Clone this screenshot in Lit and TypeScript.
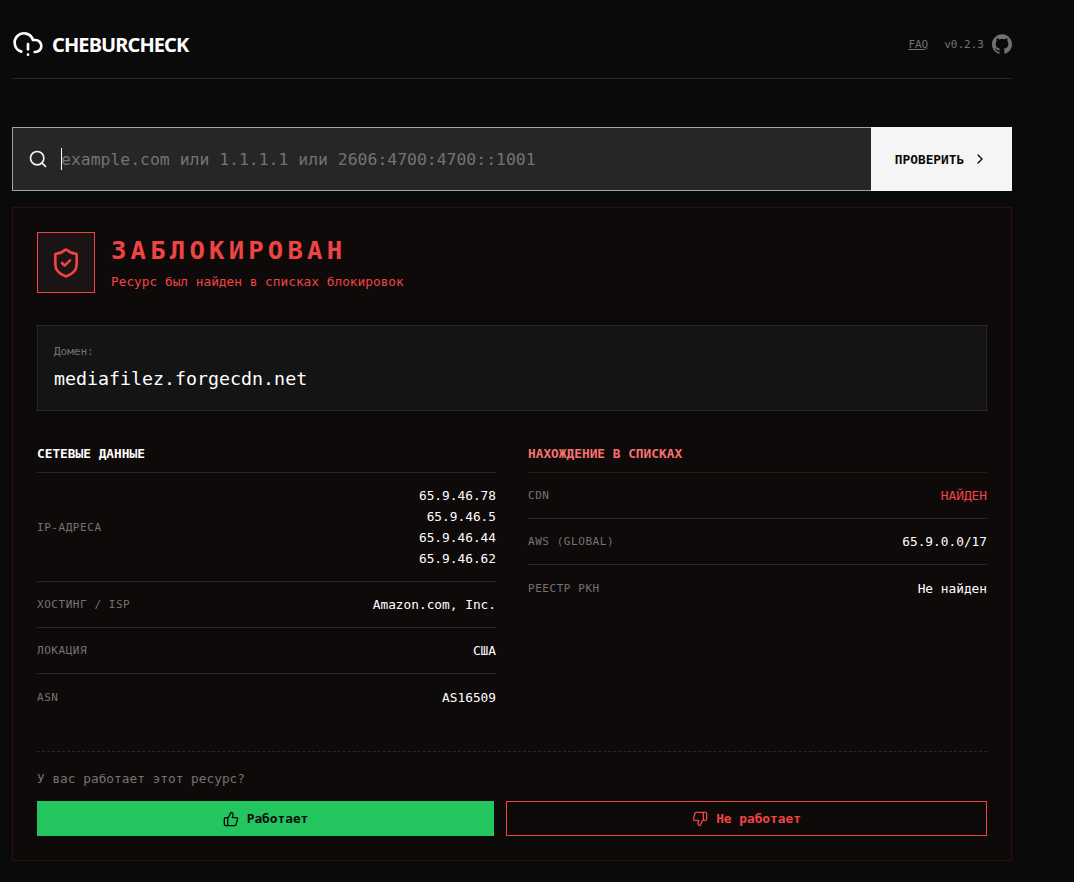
import { LitElement, html, css } from "lit";
import { customElement } from "lit/decorators.js";

@customElement("app-root")
export class AppRoot extends LitElement {
  static styles = css`
    :host { display: block; min-height: 882px; background: #0a0a0a; color: #fff; font-family: "DejaVu Sans Mono", monospace; font-size: 12.8px; box-sizing: border-box; overflow: hidden; }
    * { box-sizing: border-box; }
    .wrap { width: 1000px; margin-left: 12px; }
    header { height: 79px; padding-top: 28px; border-bottom: 1px solid #262626; display: flex; justify-content: space-between; align-items: flex-start; }
    .logo { display: flex; align-items: center; gap: 8px; height: 32px; color: #fff; }
    .brand { font-family: "Noto Sans", sans-serif; font-weight: 700; font-size: 20px; letter-spacing: -0.9px; }
    .hright { display: flex; align-items: center; gap: 16px; height: 32px; color: #737373; font-size: 11px; }
    .hright a { color: #737373; text-decoration: underline; }
    .ver { display: flex; align-items: center; gap: 8px; }
    .ver svg { color: #737373; display: block; }
    .search { margin-top: 48px; height: 64px; display: flex; }
    .field { flex: 1; display: flex; align-items: center; background: #262626; border: 1px solid #a3a3a3; border-right: 0; padding-left: 15px; }
    .field svg { color: #f5f5f5; }
    .caret { width: 1px; height: 22px; background: #fff; margin-left: 13px; margin-right: -1px; }
    .ph { color: #737373; font-size: 16.43px; }
    .go { width: 141px; background: #f5f5f5; color: #0a0a0a; display: flex; align-items: center; justify-content: center; gap: 8px; font-weight: 700; }
    .card { margin-top: 16px; height: 654px; background: #0f0a0a; border: 1px solid #2a0f0f; padding: 24px; display: flex; flex-direction: column; }
    .status { display: flex; gap: 16px; }
    .shield { width: 58px; height: 61px; border: 1px solid #ef4444; background: #1a1414; color: #ef4444; display: flex; align-items: center; justify-content: center; }
    .stitle { font-size: 25.6px; font-weight: 700; letter-spacing: 4.2px; color: #ef4444; line-height: 36px; }
    .ssub { color: #ef4444; margin-top: 6px; line-height: 16px; }
    .domain { margin-top: 32px; height: 86px; background: #141414; border: 1px solid #262626; padding: 16px; }
    .dl { font-size: 11px; color: #737373; line-height: 20px; }
    .dv { font-size: 18.3px; line-height: 28px; margin-top: 3px; }
    .cols { margin-top: 32px; display: grid; grid-template-columns: 459px 459px; gap: 32px; }
    h3 { margin: 0; font-size: 12.8px; font-weight: 700; line-height: 16px; border-bottom: 1px solid #262626; height: 27px; margin-top: 3px; }
    .red h3 { color: #f87171; border-bottom-color: #3a1212; }
    .row { display: flex; justify-content: space-between; align-items: center; padding: 12px 0; border-bottom: 1px solid #262626; min-height: 46px; line-height: 21px; }
    .row:last-child { border-bottom: 0; }
    .k { color: #737373; font-size: 11px; letter-spacing: 0.55px; }
    .v { text-align: right; }
    .found { color: #ef4444; }
    .vote { margin-top: auto; border-top: 1px dashed #2b2626; padding-top: 17px; }
    .q { color: #737373; line-height: 20px; }
    .btns { display: grid; grid-template-columns: 457px 481px; gap: 12px; margin-top: 12px; }
    .btn { height: 35px; display: flex; align-items: center; justify-content: center; gap: 8px; font-weight: 700; }
    .ok { background: #22c55e; color: #0a0a0a; }
    .no { border: 1px solid #ef4444; color: #ef4444; }
  `;

  render() {
    const net: [string, unknown][] = [
      ["IP-АДРЕСА", html`65.9.46.78<br />65.9.46.5<br />65.9.46.44<br />65.9.46.62`],
      ["ХОСТИНГ / ISP", "Amazon.com, Inc."],
      ["ЛОКАЦИЯ", "США"],
      ["ASN", "AS16509"],
    ];
    return html`<div class="wrap">
      <header>
        <div class="logo">
          <svg xmlns="http://www.w3.org/2000/svg" width="32" height="32" viewBox="0 0 24 24" fill="none" stroke="currentColor" stroke-width="2" stroke-linecap="round" stroke-linejoin="round"><path d="M12 12v4"/><path d="M12 20h.01"/><path d="M17 18h.5a1 1 0 0 0 0-9h-1.79A7 7 0 1 0 7 17.708"/></svg>
          <span class="brand">CHEBURCHECK</span>
        </div>
        <div class="hright">
          <a>FAQ</a>
          <div class="ver"><span>v0.2.3</span>
            <svg xmlns="http://www.w3.org/2000/svg" width="20" height="20" viewBox="0 0 24 24" fill="currentColor"><path d="M12 .297c-6.63 0-12 5.373-12 12 0 5.303 3.438 9.8 8.205 11.385.6.113.82-.258.82-.577 0-.285-.01-1.04-.015-2.04-3.338.724-4.042-1.61-4.042-1.61C4.422 18.07 3.633 17.7 3.633 17.7c-1.087-.744.084-.729.084-.729 1.205.084 1.838 1.236 1.838 1.236 1.07 1.835 2.809 1.305 3.495.998.108-.776.417-1.305.76-1.605-2.665-.3-5.466-1.332-5.466-5.93 0-1.31.465-2.38 1.235-3.22-.135-.303-.54-1.523.105-3.176 0 0 1.005-.322 3.3 1.23.96-.267 1.98-.399 3-.405 1.02.006 2.04.138 3 .405 2.28-1.552 3.285-1.23 3.285-1.23.645 1.653.24 2.873.12 3.176.765.84 1.23 1.91 1.23 3.22 0 4.61-2.805 5.625-5.475 5.92.42.36.81 1.096.81 2.22 0 1.606-.015 2.896-.03 3.286 0 .315.21.69.825.57C20.565 22.092 24 17.592 24 12.297c0-6.627-5.373-12-12-12"/></svg>
          </div>
        </div>
      </header>
      <div class="search">
        <div class="field">
          <svg xmlns="http://www.w3.org/2000/svg" width="20" height="20" viewBox="0 0 24 24" fill="none" stroke="currentColor" stroke-width="2" stroke-linecap="round" stroke-linejoin="round"><circle cx="11" cy="11" r="8"/><path d="m21 21-4.3-4.3"/></svg>
          <span class="caret"></span>
          <span class="ph">example.com или 1.1.1.1 или 2606:4700:4700::1001</span>
        </div>
        <div class="go">ПРОВЕРИТЬ
          <svg xmlns="http://www.w3.org/2000/svg" width="16" height="16" viewBox="0 0 24 24" fill="none" stroke="currentColor" stroke-width="2" stroke-linecap="round" stroke-linejoin="round"><path d="m9 18 6-6-6-6"/></svg>
        </div>
      </div>
      <section class="card">
        <div class="status">
          <div class="shield">
            <svg xmlns="http://www.w3.org/2000/svg" width="32" height="32" viewBox="0 0 24 24" fill="none" stroke="currentColor" stroke-width="2" stroke-linecap="round" stroke-linejoin="round"><path d="M20 13c0 5-3.5 7.5-7.66 8.95a1 1 0 0 1-.67-.01C7.5 20.5 4 18 4 13V6a1 1 0 0 1 1-1c2 0 4.5-1.2 6.24-2.72a1.17 1.17 0 0 1 1.52 0C14.51 3.81 17 5 19 5a1 1 0 0 1 1 1z"/><path d="m9 12 2 2 4-4"/></svg>
          </div>
          <div>
            <div class="stitle">ЗАБЛОКИРОВАН</div>
            <div class="ssub">Ресурс был найден в списках блокировок</div>
          </div>
        </div>
        <div class="domain">
          <div class="dl">Домен:</div>
          <div class="dv">mediafilez.forgecdn.net</div>
        </div>
        <div class="cols">
          <div>
            <h3>СЕТЕВЫЕ ДАННЫЕ</h3>
            ${net.map(([k, v]) => html`<div class="row"><span class="k">${k}</span><span class="v">${v}</span></div>`)}
          </div>
          <div class="red">
            <h3>НАХОЖДЕНИЕ В СПИСКАХ</h3>
            <div class="row"><span class="k">CDN</span><span class="v found">НАЙДЕН</span></div>
            <div class="row"><span class="k">AWS (GLOBAL)</span><span class="v">65.9.0.0/17</span></div>
            <div class="row"><span class="k">РЕЕСТР РКН</span><span class="v">Не найден</span></div>
          </div>
        </div>
        <div class="vote">
          <div class="q">У вас работает этот ресурс?</div>
          <div class="btns">
            <div class="btn ok">
              <svg xmlns="http://www.w3.org/2000/svg" width="16" height="16" viewBox="0 0 24 24" fill="none" stroke="currentColor" stroke-width="2" stroke-linecap="round" stroke-linejoin="round"><path d="M7 10v12"/><path d="M15 5.88 14 10h5.83a2 2 0 0 1 1.92 2.56l-2.33 8A2 2 0 0 1 17.5 22H4a2 2 0 0 1-2-2v-8a2 2 0 0 1 2-2h2.76a2 2 0 0 0 1.79-1.11L12 2a3.13 3.13 0 0 1 3 3.88Z"/></svg>
              Работает
            </div>
            <div class="btn no">
              <svg xmlns="http://www.w3.org/2000/svg" width="16" height="16" viewBox="0 0 24 24" fill="none" stroke="currentColor" stroke-width="2" stroke-linecap="round" stroke-linejoin="round"><path d="M17 14V2"/><path d="M9 18.12 10 14H4.17a2 2 0 0 1-1.92-2.56l2.33-8A2 2 0 0 1 6.5 2H20a2 2 0 0 1 2 2v8a2 2 0 0 1-2 2h-2.76a2 2 0 0 0-1.79 1.11L12 22a3.13 3.13 0 0 1-3-3.88Z"/></svg>
              Не работает
            </div>
          </div>
        </div>
      </section>
    </div>`;
  }
}
